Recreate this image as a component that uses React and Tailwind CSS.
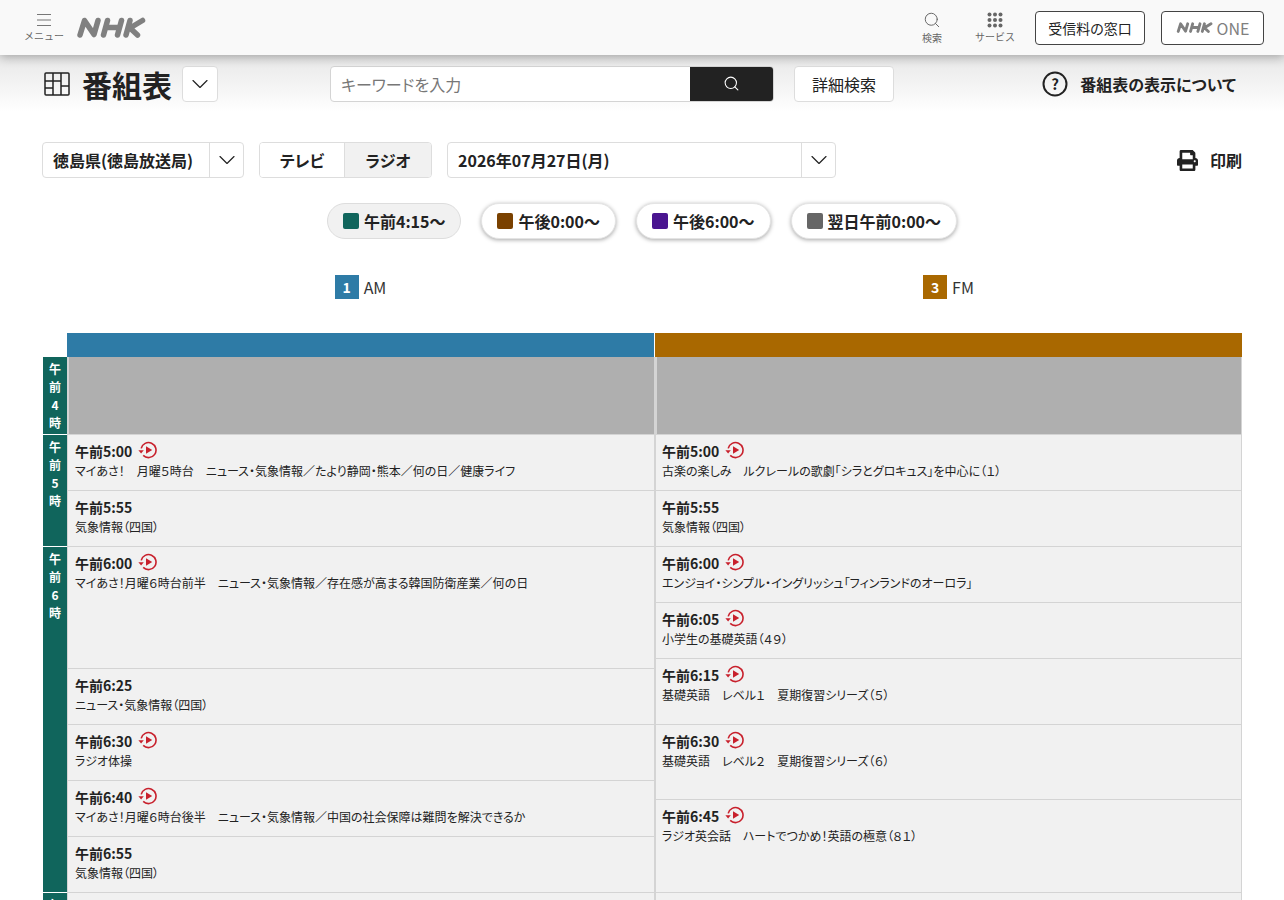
import { ChevronDown, Search } from 'lucide-react';
import { FaPrint } from 'react-icons/fa';

const hourBlocks = [
    { label: ['午', '前', '4', '時'], height: 'h-[78px]' },
    { label: ['午', '前', '5', '時'], height: 'h-[112px]' },
    { label: ['午', '前', '6', '時'], height: 'h-[346px]' },
    { label: ['午', '前', '7', '時'], height: 'h-[100px]' },
];

const leftPrograms = [
    { time: '午前5:00', title: 'マイあさ！　月曜５時台　ニュース・気象情報／たより静岡・熊本／何の日／健康ライフ', play: true, height: 'h-[56px]' },
    { time: '午前5:55', title: '気象情報（四国）', height: 'h-[56px]' },
    { time: '午前6:00', title: 'マイあさ！月曜６時台前半　ニュース・気象情報／存在感が高まる韓国防衛産業／何の日', play: true, height: 'h-[122px]' },
    { time: '午前6:25', title: 'ニュース・気象情報（四国）', height: 'h-[56px]' },
    { time: '午前6:30', title: 'ラジオ体操', play: true, height: 'h-[56px]' },
    { time: '午前6:40', title: 'マイあさ！月曜６時台後半　ニュース・気象情報／中国の社会保障は難問を解決できるか', play: true, height: 'h-[56px]' },
    { time: '午前6:55', title: '気象情報（四国）', height: 'h-[56px]' },
    { time: '', title: '', height: 'h-[56px]' },
];

const rightPrograms = [
    { time: '午前5:00', title: '古楽の楽しみ　ルクレールの歌劇「シラとグロキュス」を中心に（１）', play: true, height: 'h-[56px]' },
    { time: '午前5:55', title: '気象情報（四国）', height: 'h-[56px]' },
    { time: '午前6:00', title: 'エンジョイ・シンプル・イングリッシュ「フィンランドのオーロラ」', play: true, height: 'h-[56px]' },
    { time: '午前6:05', title: '小学生の基礎英語（４９）', play: true, height: 'h-[56px]' },
    { time: '午前6:15', title: '基礎英語　レベル１　夏期復習シリーズ（５）', play: true, height: 'h-[66px]' },
    { time: '午前6:30', title: '基礎英語　レベル２　夏期復習シリーズ（６）', play: true, height: 'h-[75px]' },
    { time: '午前6:45', title: 'ラジオ英会話　ハートでつかめ！英語の極意（８１）', play: true, height: 'h-[93px]' },
    { time: '', title: '', height: 'h-[56px]' },
];

const pills = [
    { label: '午前4:15～', color: 'bg-[#10655c]', active: true },
    { label: '午後0:00～', color: 'bg-[#7a4100]' },
    { label: '午後6:00～', color: 'bg-[#4a1590]' },
    { label: '翌日午前0:00～', color: 'bg-[#666666]' },
];

function NhkLogo({ className }) {
    return (
        <svg viewBox="0 0 70 21" fill="none" stroke="#808080" strokeWidth="5.5" strokeLinecap="round" strokeLinejoin="round" className={className} role="img" aria-label="NHK">
            <path d="M3 18L7.5 3.5L17 17.5L21 3.5" />
            <path d="M26.5 18L30.5 3.5M40.5 18L44.5 3.5M29 10.5H42" />
            <path d="M49 18L53 3.5M65.5 3.5L53 11L60.5 18" />
        </svg>
    );
}

function PlayIcon() {
    return (
        <svg width="19" height="18" viewBox="0 0 19 18" fill="none" className="ml-[6px] -mt-[1px]">
            <path d="M3.2 7.4A7.5 7.5 0 1 1 5.2 14.4" stroke="#c8202c" strokeWidth="1.6" />
            <path d="M0.4 9.2L5.8 9.2L3.1 12.6Z" fill="#c8202c" />
            <path d="M8 5.2L14.2 9L8 12.8Z" fill="#c8202c" />
        </svg>
    );
}

function Program({ program, inset }) {
    return (
        <div className={`${program.height} ${inset} border-b border-[#d4d4d4] bg-[#f1f1f1] pt-[6px] text-[#222222]`}>
            {program.time && (
                <div className="flex h-[19px] items-center text-sm font-bold">
                    {program.time}
                    {program.play && <PlayIcon />}
                </div>
            )}
            <p className="mt-[2px] text-xs leading-[18px]">{program.title}</p>
        </div>
    );
}

function ChannelHead({ num, name, color }) {
    return (
        <div className="flex w-[587px] items-center justify-center gap-[5px] text-base text-[#333333]">
            <span className={`${color} flex h-[24px] w-[24px] items-center justify-center text-sm font-bold text-white`}>{num}</span>
            {name}
        </div>
    );
}

function SelectArrow() {
    return (
        <span className="flex h-full w-[34px] items-center justify-center border-l border-[#dddddd]">
            <ChevronDown size={28} strokeWidth={1} />
        </span>
    );
}

export default function App() {
    return (
        <div className="h-[900px] overflow-hidden bg-white font-['Noto_Sans_CJK_JP','Noto_Sans',sans-serif] text-[#222222] [font-feature-settings:'palt']">
            <header className="relative z-10 flex h-[55px] items-center bg-[#f9f9f9] pl-6 pr-[20px] shadow-[0_2px_10px_rgba(0,0,0,0.3)]">
                <button className="flex w-[40px] flex-col items-center text-[#666666]">
                    <svg width="16" height="14" viewBox="0 0 16 14" stroke="#777777" strokeWidth="1.2">
                        <path d="M1 1.5H15M1 7H15M1 12.5H15" />
                    </svg>
                    <span className="mt-[3px] text-[10px] leading-[12px] [font-feature-settings:normal]">メニュー</span>
                </button>
                <NhkLogo className="ml-[13px] h-[21px] w-[70px]" />
                <div className="flex-1" />
                <button className="flex w-[40px] flex-col items-center text-[#666666]">
                    <Search size={18} strokeWidth={1.3} />
                    <span className="mt-[3px] text-[10px] leading-[12px] [font-feature-settings:normal]">検索</span>
                </button>
                <button className="ml-[23px] flex w-[40px] flex-col items-center text-[#666666]">
                    <svg width="16" height="16" viewBox="0 0 16 16" fill="#666666">
                        <circle cx="2.5" cy="2.5" r="2" /><circle cx="8" cy="2.5" r="2" /><circle cx="13.5" cy="2.5" r="2" />
                        <circle cx="2.5" cy="8" r="2" /><circle cx="8" cy="8" r="2" /><circle cx="13.5" cy="8" r="2" />
                        <circle cx="2.5" cy="13.5" r="2" /><circle cx="8" cy="13.5" r="2" /><circle cx="13.5" cy="13.5" r="2" />
                    </svg>
                    <span className="mt-[3px] whitespace-nowrap text-[10px] leading-[12px] [font-feature-settings:normal]">サービス</span>
                </button>
                <button className="ml-[20px] h-[34px] w-[110px] rounded border border-[#444444] bg-white text-sm">受信料の窓口</button>
                <button className="ml-[16px] flex h-[34px] w-[103px] items-center justify-center gap-[3px] rounded border border-[#444444] bg-white text-[#808080]">
                    <NhkLogo className="h-[11px] w-[38px]" />
                    <span className="text-base leading-none">ONE</span>
                </button>
            </header>

            <div className="flex h-[57px] items-center bg-gradient-to-b from-[#e8e8e8] via-[#f3f3f3] to-white pl-[44px] pr-[48px]">
                <svg width="26" height="24" viewBox="0 0 26 24" fill="none" stroke="#222222" strokeWidth="1.5">
                    <rect x="1" y="1" width="24" height="22" rx="1" />
                    <path d="M9 1V23M17 1V23M1 9H17M1 16H9M17 14H25" />
                </svg>
                <h1 className="ml-[12px] text-[30px] font-bold leading-none">番組表</h1>
                <button className="ml-[10px] flex h-[36px] w-[36px] items-center justify-center rounded border border-[#dddddd] bg-white">
                    <ChevronDown size={28} strokeWidth={1} />
                </button>
                <div className="ml-[112px] flex h-[36px] w-[444px] overflow-hidden rounded border border-[#d4d4d4] bg-white">
                    <span className="flex flex-1 items-center pl-[10px] text-base text-[#777777]">キーワードを入力</span>
                    <span className="flex w-[83px] items-center justify-center bg-[#222222] text-white">
                        <Search size={17} strokeWidth={1.5} />
                    </span>
                </div>
                <button className="ml-[20px] h-[36px] w-[100px] rounded border border-[#dddddd] bg-white text-base">詳細検索</button>
                <div className="flex-1" />
                <svg width="26" height="26" viewBox="0 0 26 26" fill="none">
                    <circle cx="13" cy="13" r="11.5" stroke="#222222" strokeWidth="2" />
                    <text x="13" y="18.5" textAnchor="middle" fontSize="15" fontWeight="700" fill="#222222">?</text>
                </svg>
                <span className="ml-[12px] text-base font-bold">番組表の表示について</span>
            </div>

            <div className="mt-[30px] flex items-center pl-[42px] pr-[42px]">
                <div className="flex h-[36px] w-[202px] items-center rounded border border-[#dddddd] bg-white">
                    <span className="flex-1 pl-[10px] text-base font-bold">徳島県(徳島放送局)</span>
                    <SelectArrow />
                </div>
                <div className="ml-[15px] flex h-[36px] w-[173px] overflow-hidden rounded border border-[#dddddd] text-base font-bold">
                    <span className="flex w-[85px] items-center justify-center border-r border-[#dddddd] bg-white">テレビ</span>
                    <span className="flex flex-1 items-center justify-center bg-[#f1f1f1]">ラジオ</span>
                </div>
                <div className="ml-[15px] flex h-[36px] w-[389px] items-center rounded border border-[#dddddd] bg-white">
                    <span className="flex-1 pl-[10px] text-base font-bold">2026年07月27日(月)</span>
                    <SelectArrow />
                </div>
                <div className="flex-1" />
                <FaPrint size={21} className="text-[#222222]" />
                <span className="ml-[12px] text-base font-bold">印刷</span>
            </div>

            <div className="mt-[25px] flex justify-center gap-[20px]">
                {pills.map((pill) => (
                    <button
                        key={pill.label}
                        className={`flex h-[36px] items-center gap-[5px] rounded-full px-[15px] text-base font-bold ${pill.active ? 'border border-[#dddddd] bg-[#f1f1f1]' : 'border border-[#e4e4e4] bg-white shadow-[0_1px_4px_rgba(0,0,0,0.35)]'}`}
                    >
                        <span className={`${pill.color} h-[16px] w-[16px] rounded-[2px]`} />
                        {pill.label}
                    </button>
                ))}
            </div>

            <div className="mt-[36px] flex h-[24px] pl-[67px]">
                <ChannelHead num="1" name="AM" color="bg-[#2e7ba6]" />
                <div className="w-px" />
                <ChannelHead num="3" name="FM" color="bg-[#a96800]" />
            </div>

            <div className="mt-[34px] flex pl-[43px]">
                <div className="w-[24px] pt-[24px]">
                    {hourBlocks.map((block, i) => (
                        <div key={i} className={`${block.height} flex flex-col items-center border-b border-white bg-[#10655c] pt-[3px] text-xs font-bold leading-[18px] text-white`}>
                            {block.label.map((ch, j) => <span key={j}>{ch}</span>)}
                        </div>
                    ))}
                </div>
                {[leftPrograms, rightPrograms].map((programs, i) => (
                    <div key={i} className={`flex flex-col ${i === 0 ? 'w-[588px]' : 'w-[587px]'}`}>
                        <div className={`h-[24px] ${i === 0 ? 'mr-px bg-[#2e7ba6]' : 'bg-[#a96800]'}`} />
                        <div className="h-[78px] border-b border-r border-[#d4d4d4] border-l-2 border-l-[#d4d4d4] bg-[#afafaf]" />
                        {programs.map((program, j) => (
                            <div key={j} className="border-x border-[#d4d4d4]">
                                <Program program={program} inset={i === 0 ? 'pl-[7px]' : 'pl-[6px]'} />
                            </div>
                        ))}
                    </div>
                ))}
            </div>
        </div>
    );
}
